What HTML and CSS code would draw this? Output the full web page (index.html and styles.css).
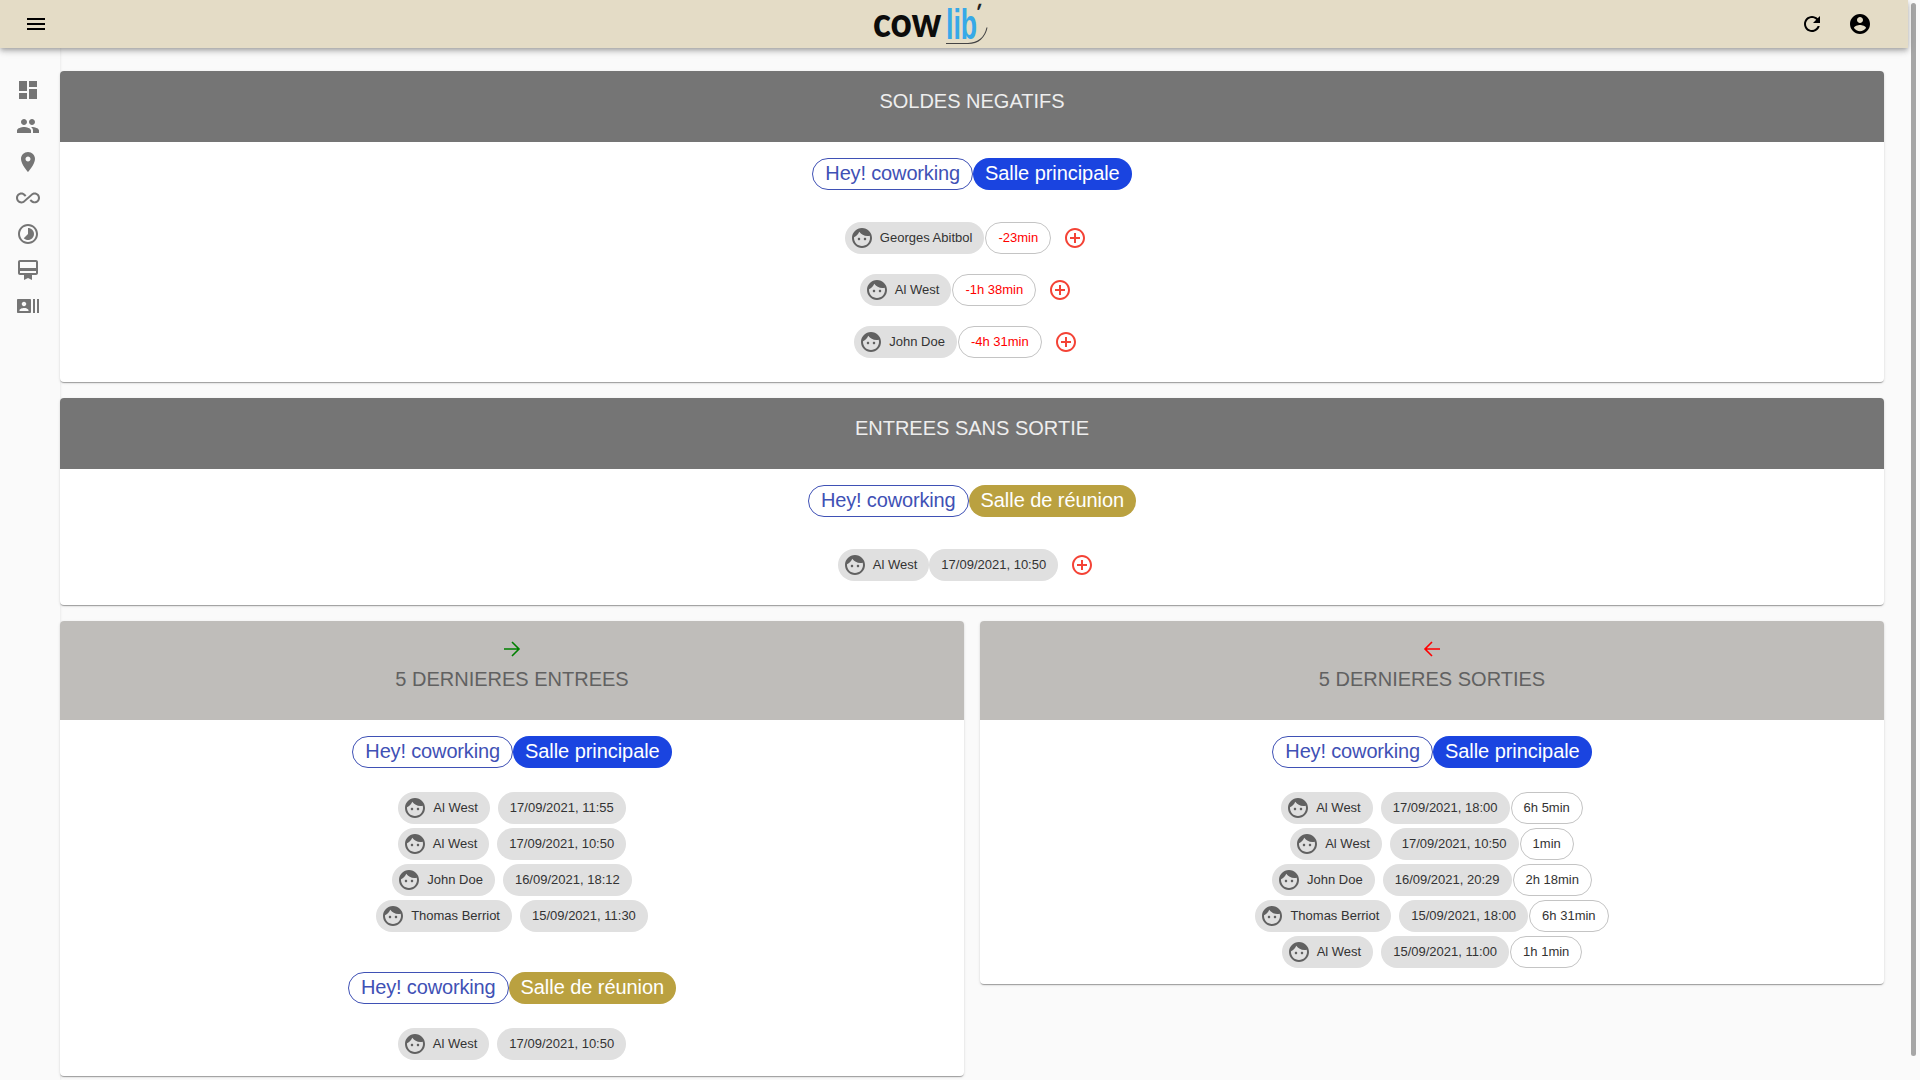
FILE: index.html
```html
<!DOCTYPE html>
<html lang="fr">
<head>
  <meta charset="UTF-8">
  <title>Cowlib</title>
  <link rel="stylesheet" href="styles.css">
</head>
<body>
  <svg class="icon-defs" xmlns="http://www.w3.org/2000/svg">
    <symbol id="i-face" viewBox="0 0 24 24"><path d="M9 11.75c-.69 0-1.25.56-1.25 1.25s.56 1.25 1.25 1.25 1.25-.56 1.25-1.25-.56-1.25-1.25-1.25zm6 0c-.69 0-1.25.56-1.25 1.25s.56 1.25 1.25 1.25 1.25-.56 1.25-1.25-.56-1.25-1.25-1.25zM12 2C6.48 2 2 6.48 2 12s4.48 10 10 10 10-4.48 10-10S17.52 2 12 2zm0 18c-4.41 0-8-3.59-8-8 0-.29.02-.58.05-.86 2.36-1.05 4.23-2.98 5.21-5.37C11.07 8.33 14.05 10 17.42 10c.78 0 1.53-.09 2.25-.26.21.71.33 1.47.33 2.26 0 4.41-3.59 8-8 8z"/></symbol>
    <symbol id="i-add" viewBox="0 0 24 24"><path d="M13 7h-2v4H7v2h4v4h2v-4h4v-2h-4V7zm-1-5C6.48 2 2 6.48 2 12s4.48 10 10 10 10-4.48 10-10S17.52 2 12 2zm0 18c-4.41 0-8-3.59-8-8s3.59-8 8-8 8 3.59 8 8-3.59 8-8 8z"/></symbol>
  </svg>

  <!-- Top bar -->
  <header class="toolbar">
    <svg class="icon" viewBox="0 0 24 24"><path d="M3 18h18v-2H3v2zm0-5h18v-2H3v2zm0-7v2h18V6H3z"/></svg>
    <div class="logo">
      <span class="logo-cow">cow</span>
      <span class="logo-lib">lib</span>
      <span class="logo-tick">'</span>
      <svg class="logo-arc" viewBox="0 0 42 22"><path d="M0 19.5h22c10 0 17-6 19-16"/></svg>
    </div>
    <div class="toolbar-right">
      <svg class="icon" viewBox="0 0 24 24"><path d="M17.65 6.35C16.2 4.9 14.21 4 12 4c-4.42 0-7.99 3.58-7.99 8s3.57 8 7.99 8c3.73 0 6.84-2.55 7.73-6h-2.08c-.82 2.33-3.04 4-5.65 4-3.31 0-6-2.69-6-6s2.69-6 6-6c1.66 0 3.14.69 4.22 1.78L13 11h7V4l-2.35 2.35z"/></svg>
      <svg class="icon" viewBox="0 0 24 24"><path d="M12 2C6.48 2 2 6.48 2 12s4.48 10 10 10 10-4.48 10-10S17.52 2 12 2zm0 3c1.66 0 3 1.34 3 3s-1.34 3-3 3-3-1.34-3-3 1.34-3 3-3zm0 14.2c-2.5 0-4.71-1.28-6-3.22.03-1.99 4-3.08 6-3.08 1.99 0 5.97 1.09 6 3.08-1.29 1.94-3.5 3.22-6 3.22z"/></svg>
    </div>
  </header>

  <div class="layout">
    <!-- Side nav -->
    <nav class="sidenav">
      <svg class="icon" viewBox="0 0 24 24"><path d="M3 13h8V3H3v10zm0 8h8v-6H3v6zm10 0h8V11h-8v10zm0-18v6h8V3h-8z"/></svg>
      <svg class="icon" viewBox="0 0 24 24"><path d="M16 11c1.66 0 2.99-1.34 2.99-3S17.66 5 16 5c-1.66 0-3 1.34-3 3s1.34 3 3 3zm-8 0c1.66 0 2.99-1.34 2.99-3S9.66 5 8 5C6.34 5 5 6.34 5 8s1.34 3 3 3zm0 2c-2.33 0-7 1.17-7 3.5V19h14v-2.5c0-2.33-4.67-3.5-7-3.5zm8 0c-.29 0-.62.02-.97.05 1.16.84 1.97 1.97 1.97 3.45V19h6v-2.5c0-2.33-4.67-3.5-7-3.5z"/></svg>
      <svg class="icon" viewBox="0 0 24 24"><path d="M12 2C8.13 2 5 5.13 5 9c0 5.25 7 13 7 13s7-7.75 7-13c0-3.87-3.13-7-7-7zm0 9.5c-1.38 0-2.5-1.12-2.5-2.5s1.12-2.5 2.5-2.5 2.5 1.12 2.5 2.5-1.12 2.5-2.5 2.5z"/></svg>
      <svg class="icon" viewBox="0 0 24 24"><path d="M18.6 6.62c-1.44 0-2.8.56-3.77 1.53L12 10.66 10.48 12h.01L7.8 14.39c-.64.64-1.49.99-2.4.99-1.87 0-3.39-1.51-3.39-3.38S3.53 8.62 5.4 8.62c.91 0 1.76.35 2.44 1.03l1.13 1 1.51-1.34L9.22 8.2C8.2 7.18 6.84 6.62 5.4 6.62 2.42 6.62 0 9.04 0 12s2.42 5.38 5.4 5.38c1.44 0 2.8-.56 3.77-1.53l2.83-2.5.01.01L13.52 12h-.01l2.69-2.39c.64-.64 1.49-.99 2.4-.99 1.87 0 3.39 1.51 3.39 3.38s-1.52 3.38-3.39 3.38c-.9 0-1.76-.35-2.44-1.03l-1.14-1.01-1.51 1.34 1.27 1.12c1.02 1.01 2.37 1.57 3.82 1.57 2.98 0 5.4-2.41 5.4-5.38s-2.42-5.37-5.4-5.37z"/></svg>
      <svg class="icon" viewBox="0 0 24 24"><path d="M16.24 7.76C15.07 6.59 13.54 6 12 6v6l-4.24 4.24c2.34 2.34 6.14 2.34 8.49 0 2.34-2.34 2.34-6.14-.01-8.48zM12 2C6.48 2 2 6.48 2 12s4.48 10 10 10 10-4.48 10-10S17.52 2 12 2zm0 18c-4.42 0-8-3.58-8-8s3.58-8 8-8 8 3.58 8 8-3.58 8-8 8z"/></svg>
      <svg class="icon" viewBox="0 0 24 24"><path d="M20 2H4c-1.11 0-2 .89-2 2v11c0 1.11.89 2 2 2h4v5l4-2 4 2v-5h4c1.11 0 2-.89 2-2V4c0-1.11-.89-2-2-2zm0 13H4v-2h16v2zm0-5H4V4h16v6z"/></svg>
      <svg class="icon" viewBox="0 0 24 24"><path d="M21 5v14h2V5h-2zm-4 14h2V5h-2v14zM14 5H2c-.55 0-1 .45-1 1v12c0 .55.45 1 1 1h12c.55 0 1-.45 1-1V6c0-.55-.45-1-1-1zM8 7.75c1.24 0 2.25 1.01 2.25 2.25S9.24 12.25 8 12.25 5.75 11.24 5.75 10 6.76 7.75 8 7.75zM12.5 17h-9v-.75c0-1.5 3-2.25 4.5-2.25s4.5.75 4.5 2.25V17z"/></svg>
    </nav>

    <main class="content">
      <!-- Soldes negatifs -->
      <section class="card">
        <h2 class="card-head dark">SOLDES NEGATIFS</h2>
        <div class="card-body wide">
          <div class="pills"><span class="pill outline">Hey! coworking</span><span class="pill blue">Salle principale</span></div>
          <div class="rows spaced">
            <div class="row"><span class="chip"><svg class="face"><use href="#i-face"/></svg>Georges Abitbol</span><span class="chip line red">-23min</span><span class="add"><svg><use href="#i-add"/></svg></span></div>
            <div class="row"><span class="chip"><svg class="face"><use href="#i-face"/></svg>Al West</span><span class="chip line red">-1h 38min</span><span class="add"><svg><use href="#i-add"/></svg></span></div>
            <div class="row"><span class="chip"><svg class="face"><use href="#i-face"/></svg>John Doe</span><span class="chip line red">-4h 31min</span><span class="add"><svg><use href="#i-add"/></svg></span></div>
          </div>
        </div>
      </section>

      <!-- Entrees sans sortie -->
      <section class="card">
        <h2 class="card-head dark">ENTREES SANS SORTIE</h2>
        <div class="card-body wide">
          <div class="pills"><span class="pill outline">Hey! coworking</span><span class="pill gold">Salle de réunion</span></div>
          <div class="rows spaced">
            <div class="row"><span class="chip"><svg class="face"><use href="#i-face"/></svg>Al West</span><span class="chip">17/09/2021, 10:50</span><span class="add"><svg><use href="#i-add"/></svg></span></div>
          </div>
        </div>
      </section>

      <div class="columns">
        <!-- Dernieres entrees -->
        <section class="card">
          <div class="card-head light">
            <svg class="arrow in" viewBox="0 0 24 24"><path d="M4 12h15M12 5l7 7-7 7"/></svg>
            <h2>5 DERNIERES ENTREES</h2>
          </div>
          <div class="card-body">
            <div class="pills"><span class="pill outline">Hey! coworking</span><span class="pill blue">Salle principale</span></div>
            <div class="rows">
              <div class="row log"><span class="chip"><svg class="face"><use href="#i-face"/></svg>Al West</span><span class="chip">17/09/2021, 11:55</span></div>
              <div class="row log"><span class="chip"><svg class="face"><use href="#i-face"/></svg>Al West</span><span class="chip">17/09/2021, 10:50</span></div>
              <div class="row log"><span class="chip"><svg class="face"><use href="#i-face"/></svg>John Doe</span><span class="chip">16/09/2021, 18:12</span></div>
              <div class="row log"><span class="chip"><svg class="face"><use href="#i-face"/></svg>Thomas Berriot</span><span class="chip">15/09/2021, 11:30</span></div>
            </div>
            <div class="pills second"><span class="pill outline">Hey! coworking</span><span class="pill gold">Salle de réunion</span></div>
            <div class="rows">
              <div class="row log"><span class="chip"><svg class="face"><use href="#i-face"/></svg>Al West</span><span class="chip">17/09/2021, 10:50</span></div>
            </div>
          </div>
        </section>

        <!-- Dernieres sorties -->
        <section class="card">
          <div class="card-head light">
            <svg class="arrow out" viewBox="0 0 24 24"><path d="M20 12H5M12 5l-7 7 7 7"/></svg>
            <h2>5 DERNIERES SORTIES</h2>
          </div>
          <div class="card-body">
            <div class="pills"><span class="pill outline">Hey! coworking</span><span class="pill blue">Salle principale</span></div>
            <div class="rows">
              <div class="row log"><span class="chip"><svg class="face"><use href="#i-face"/></svg>Al West</span><span class="chip">17/09/2021, 18:00</span><span class="chip line">6h 5min</span></div>
              <div class="row log"><span class="chip"><svg class="face"><use href="#i-face"/></svg>Al West</span><span class="chip">17/09/2021, 10:50</span><span class="chip line">1min</span></div>
              <div class="row log"><span class="chip"><svg class="face"><use href="#i-face"/></svg>John Doe</span><span class="chip">16/09/2021, 20:29</span><span class="chip line">2h 18min</span></div>
              <div class="row log"><span class="chip"><svg class="face"><use href="#i-face"/></svg>Thomas Berriot</span><span class="chip">15/09/2021, 18:00</span><span class="chip line">6h 31min</span></div>
              <div class="row log"><span class="chip"><svg class="face"><use href="#i-face"/></svg>Al West</span><span class="chip">15/09/2021, 11:00</span><span class="chip line">1h 1min</span></div>
            </div>
          </div>
        </section>
      </div>
    </main>
  </div>

  <div class="scroll-thumb"></div>
</body>
</html>
```

FILE: styles.css
```css
* { box-sizing: border-box; }

html, body {
  margin: 0;
  height: 100%;
  overflow: hidden;
}

body {
  background: #fafafa;
  color: #333;
  font-family: "Liberation Sans", Arial, sans-serif;
}

.icon-defs { display: none; }

.icon {
  width: 24px;
  height: 24px;
  display: block;
  fill: currentColor;
}

/* Top bar */
.toolbar {
  position: relative;
  z-index: 2;
  height: 48px;
  margin-right: 12px;
  padding: 0 36px 0 24px;
  display: flex;
  align-items: center;
  justify-content: space-between;
  background: #e4dcc6;
  color: #000;
  box-shadow: 0 2px 4px -1px rgba(0,0,0,.2), 0 4px 5px rgba(0,0,0,.14), 0 1px 10px rgba(0,0,0,.12);
}

.toolbar-right {
  display: flex;
  gap: 24px;
}

/* Logo pieces sit on top of each other, like the original mark */
.logo {
  position: relative;
  width: 114px;
  height: 48px;
  margin-left: 12px;
  line-height: 48px;
}

.logo span { position: absolute; }

.logo-cow {
  left: 0;
  top: -2px;
  font-family: Lato, sans-serif;
  font-size: 41px;
  font-weight: 900;
  color: #0c0c0c;
  transform: scaleX(.9);
  transform-origin: left center;
}

.logo-lib {
  left: 73px;
  top: 0;
  font-size: 43px;
  font-weight: 700;
  color: #36a9e8;
  transform: scaleX(.62);
  transform-origin: left center;
}

.logo-tick {
  left: 102px;
  top: 0;
  font-family: Lato, sans-serif;
  font-size: 24px;
  font-weight: 700;
  line-height: 24px;
  color: #222;
  transform: skewX(-18deg);
}

.logo-arc {
  position: absolute;
  left: 73px;
  top: 24px;
  width: 42px;
  height: 22px;
  fill: none;
  stroke: #444;
  stroke-width: 1.1;
}

/* Page layout */
.layout { display: flex; }

.sidenav {
  flex: 0 0 60px;
  height: 1032px;
  padding: 30px 0 0 16px;
  display: flex;
  flex-direction: column;
  gap: 12px;
  color: #757575;
  box-shadow: 1px 0 2px rgba(0,0,0,.06);
}

.content {
  flex: 1;
  padding: 23px 36px 0 0;
  min-width: 0;
}

.columns {
  display: grid;
  grid-template-columns: 1fr 1fr;
  gap: 16px;
  align-items: start;
}

/* Cards */
.card {
  margin-bottom: 16px;
  background: #fff;
  border-radius: 4px;
  overflow: hidden;
  box-shadow: 0 2px 1px -1px rgba(0,0,0,.2), 0 1px 1px rgba(0,0,0,.14), 0 1px 3px rgba(0,0,0,.12);
}

.card-head {
  margin: 0;
  text-align: center;
  font-size: 20px;
  font-weight: 400;
  line-height: 28px;
}

.card-head.dark {
  height: 71px;
  padding-top: 16px;
  background: #757575;
  color: #eeeeee;
}

.card-head.light {
  height: 99px;
  padding-top: 16px;
  background: #bfbdba;
  color: #616161;
}

.card-head h2 {
  margin: 4px 0 0;
  font: inherit;
}

.arrow {
  display: block;
  width: 24px;
  height: 24px;
  margin: 0 auto;
  fill: none;
  stroke-width: 1.6;
}
.arrow.in { stroke: #008000; }
.arrow.out { stroke: #ff0000; }

.card-body {
  padding: 16px 0;
  text-align: center;
}
.card-body.wide { padding-bottom: 24px; }

/* Salle pills */
.pills {
  display: flex;
  justify-content: center;
}
.pills.second { margin-top: 40px; }

.pill {
  height: 32px;
  padding: 0 12px;
  border-radius: 16px;
  font-size: 20px;
  line-height: 30px;
  letter-spacing: -.06px;
  white-space: nowrap;
}
.pill.outline {
  border: 1px solid #3f51b5;
  color: #3f51b5;
  line-height: 28px;
  letter-spacing: -.15px;
}
.pill.blue {
  background: #1a44e0;
  color: #fff;
}
.pill.gold {
  background: #baa140;
  color: #fff;
}

/* Person rows */
.rows {
  display: flex;
  flex-direction: column;
  gap: 4px;
  margin-top: 24px;
}
.rows.spaced {
  gap: 20px;
  margin-top: 32px;
}

.row {
  display: flex;
  justify-content: center;
  height: 32px;
}
.row.log .chip:nth-child(2) { margin-left: 8px; }
.row .line { margin-left: 1px; }
.row.log .line { margin-left: 1px; }

.chip {
  display: flex;
  align-items: center;
  height: 32px;
  padding: 0 12px 2px;
  border-radius: 16px;
  background: #e0e0e0;
  color: #333;
  font-size: 13px;
  white-space: nowrap;
}
.chip.line {
  background: #fff;
  border: 1px solid #c4c4c4;
}
.chip.red { color: #ff0000; }

.face {
  width: 24px;
  height: 24px;
  margin: 2px 6px 0 -7px;
  fill: #616161;
}

.add {
  display: flex;
  justify-content: center;
  align-items: center;
  width: 48px;
  height: 32px;
}
.add svg {
  width: 24px;
  height: 24px;
  fill: #f44336;
}

.scroll-thumb {
  position: absolute;
  top: 3px;
  left: 1911px;
  width: 5px;
  height: 1053px;
  border-radius: 3px;
  background: #a6a6a6;
}
```
